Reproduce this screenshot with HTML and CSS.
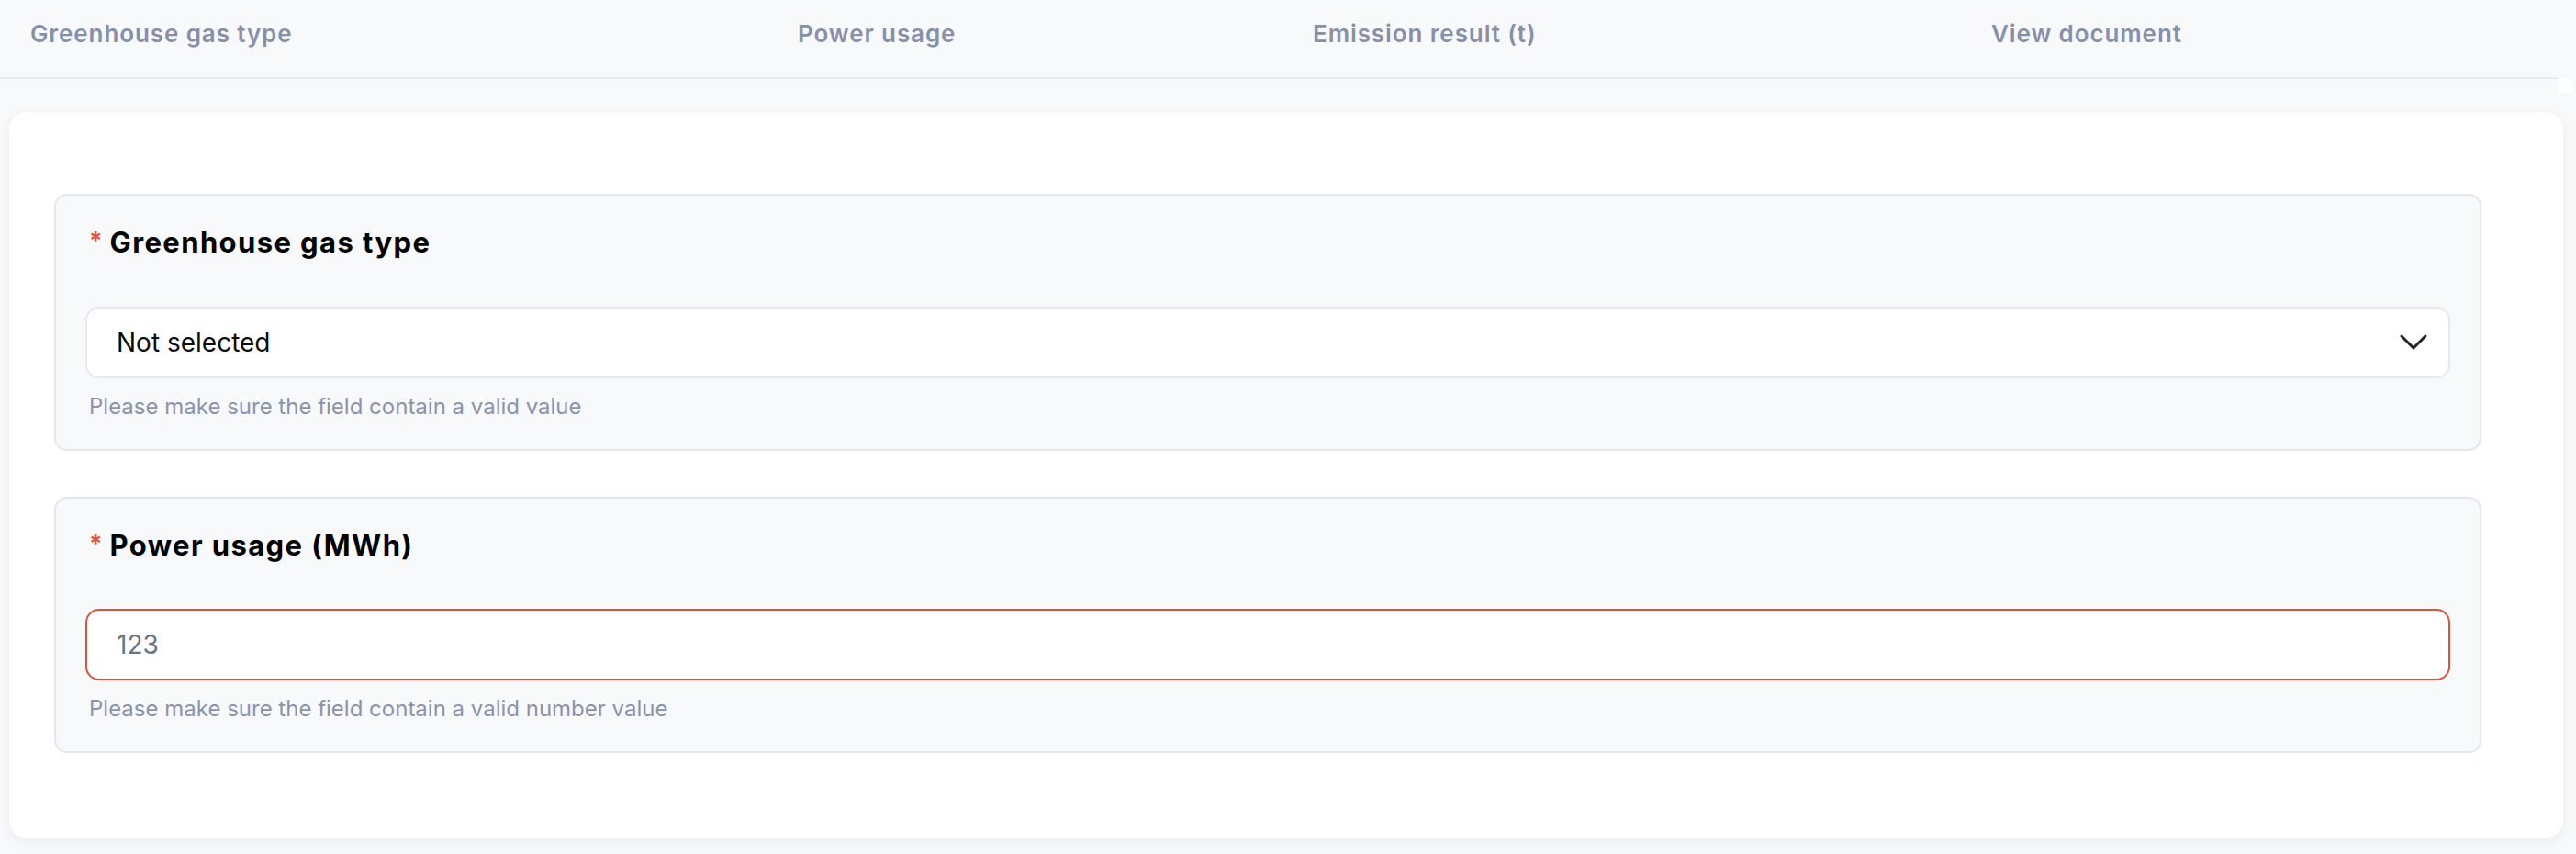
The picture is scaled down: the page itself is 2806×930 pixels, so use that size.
FILE: index.html
```html
<!DOCTYPE html>
<html lang="en">
<head>
<meta charset="utf-8">
<title>Emission form</title>
<link rel="stylesheet" href="styles.css">
</head>
<body>
<div class="page">
  <div class="table-head">
    <div class="th">Greenhouse gas type</div>
    <div class="th">Power usage</div>
    <div class="th">Emission result (t)</div>
    <div class="th">View document</div>
  </div>
  <div class="scroll-corner"></div>
  <div class="card">
    <section class="field">
      <div class="label"><span class="req">*</span><span>Greenhouse gas type</span></div>
      <div class="select">
        <span class="select-value">Not selected</span>
        <svg class="chevron" width="30" height="18" viewBox="0 0 30 18" fill="none">
          <path d="M2 2 L15 15 L28 2" stroke="#1f2430" stroke-width="3" stroke-linecap="round" stroke-linejoin="round"/>
        </svg>
      </div>
      <div class="help">Please make sure the field contain a valid value</div>
    </section>
    <section class="field">
      <div class="label"><span class="req">*</span><span>Power usage (MWh)</span></div>
      <div class="input invalid"><span class="input-value">123</span></div>
      <div class="help">Please make sure the field contain a valid number value</div>
    </section>
  </div>
</div>
</body>
</html>
```

FILE: styles.css
```css
* { box-sizing: border-box; }

html, body {
  margin: 0;
  padding: 0;
  background: #f8f9fb;
  font-family: Inter, "Noto Sans", "Liberation Sans", sans-serif;
}

.page {
  position: relative;
  width: 2806px;
  height: 930px;
  overflow: hidden;
}

.table-head {
  width: 2786px;
  height: 86px;
  padding: 21px 0 0 33px;
  display: grid;
  grid-template-columns: 836px 561px 739px 1fr;
  border-bottom: 2px solid #e8eaee;
  background: #f8f9fb;
}

.th {
  font-size: 26px;
  font-weight: 600;
  color: #8790aa;
  line-height: normal;
  letter-spacing: 0.9px;
}

.scroll-corner {
  position: absolute;
  left: 2786px;
  top: 86px;
  width: 16px;
  height: 15px;
  background: #ffffff;
}

.card {
  margin: 36px 14px 0 10px;
  background: #ffffff;
  border-radius: 20px;
  box-shadow: 0 4px 14px rgba(20, 30, 60, 0.06);
  padding: 89px 89px 97px 49px;
  display: flex;
  flex-direction: column;
  gap: 50px;
  height: 791px;
}

.field {
  background: #f8f9fb;
  border: 2px solid #e3e7ef;
  border-radius: 14px;
  padding: 32px 32px 32px 32px;
  display: flex;
  flex-direction: column;
}

.label {
  font-size: 31px;
  font-weight: 700;
  color: #000000;
  line-height: normal;
  letter-spacing: 1.4px;
  display: flex;
  align-items: flex-start;
  margin-left: 4px;
}

.req {
  color: #e5533d;
  font-size: 26px;
  margin-right: 8px;
  margin-top: 1px;
  letter-spacing: 0;
}

.select,
.input {
  margin-top: 51.5px;
  height: 78px;
  background: #ffffff;
  border: 2px solid #e4e8f0;
  border-radius: 15px;
  display: flex;
  align-items: center;
  padding: 0 23px 0 32px;
  font-size: 28px;
  line-height: normal;
}

.select {
  justify-content: space-between;
}

.select-value {
  color: #0b0b0c;
}

.input.invalid {
  border-color: #df5139;
}

.input-value {
  color: #6b7280;
}

.chevron {
  display: block;
}

.help {
  margin-top: 16px;
  margin-left: 4px;
  font-size: 24px;
  color: #8a93ab;
  line-height: normal;
  letter-spacing: 0;
}
```
